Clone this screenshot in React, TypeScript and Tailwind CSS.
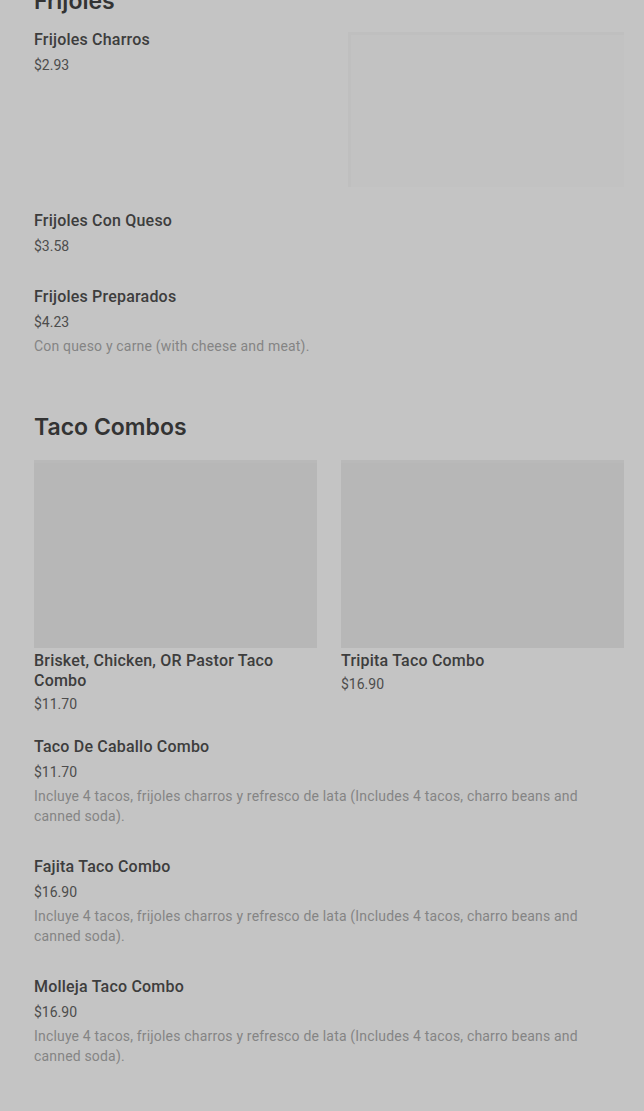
const combos = [
  {
    name: 'Taco De Caballo Combo',
    price: '$11.70',
    desc: 'Incluye 4 tacos, frijoles charros y refresco de lata (Includes 4 tacos, charro beans and canned soda).',
  },
  {
    name: 'Fajita Taco Combo',
    price: '$16.90',
    desc: 'Incluye 4 tacos, frijoles charros y refresco de lata (Includes 4 tacos, charro beans and canned soda).',
  },
  {
    name: 'Molleja Taco Combo',
    price: '$16.90',
    desc: 'Incluye 4 tacos, frijoles charros y refresco de lata (Includes 4 tacos, charro beans and canned soda).',
  },
];

function ItemText({ name, price, desc }: { name: string; price: string; desc?: string }) {
  return (
    <div>
      <h3 className="text-base leading-5 font-medium tracking-[0.2px] text-[#3d3d3d]">{name}</h3>
      <p className="mt-[5px] text-sm leading-5 text-[#4d4d4d]">{price}</p>
      {desc && <p className="mt-[4px] text-sm leading-5 tracking-[0.18px] text-[#848484]">{desc}</p>}
    </div>
  );
}

export default function App() {
  return (
    <div
      className="min-h-[1111px] bg-[#c4c4c4] pl-[34px] pr-[20px] overflow-hidden"
      style={{ fontFamily: 'Roboto, "Liberation Sans", sans-serif' }}
    >
      {/* Frijoles */}
      <h2 className="-mt-[15px] text-[23px] leading-8 font-semibold text-[#333333] font-['Inter',sans-serif]">
        Frijoles
      </h2>
      <div className="mt-[13px] flex justify-between">
        <ItemText name="Frijoles Charros" price="$2.93" />
        <div className="mt-[2px] h-[155px] w-[276px] bg-[#c2c2c2] border-l-[3px] border-t-[3px] border-[#bfbfbf]" />
      </div>
      <div className="mt-[24px]">
        <ItemText name="Frijoles Con Queso" price="$3.58" />
      </div>
      <div className="mt-[31px]">
        <ItemText
          name="Frijoles Preparados"
          price="$4.23"
          desc="Con queso y carne (with cheese and meat)."
        />
      </div>

      {/* Taco Combos */}
      <h2 className="mt-[55px] text-[23px] leading-8 font-semibold text-[#333333] font-['Inter',sans-serif]">
        Taco Combos
      </h2>
      <div className="mt-[17px] grid grid-cols-2 gap-x-[24px]">
        <div>
          <div className="h-[188px] bg-[#b7b7b7] border-t-[3px] border-[#b9b9b9]" />
          <h3 className="mt-[3px] text-base leading-5 font-medium tracking-[0.2px] text-[#3d3d3d]">
            Brisket, Chicken, OR Pastor Taco Combo
          </h3>
          <p className="mt-[3px] text-sm leading-5 text-[#4d4d4d]">$11.70</p>
        </div>
        <div>
          <div className="h-[188px] bg-[#b7b7b7] border-t-[3px] border-[#b9b9b9]" />
          <h3 className="mt-[3px] text-base leading-5 font-medium tracking-[0.2px] text-[#3d3d3d]">
            Tripita Taco Combo
          </h3>
          <p className="mt-[3px] text-sm leading-5 text-[#4d4d4d]">$16.90</p>
        </div>
      </div>
      <div className="mt-[23px] flex flex-col gap-[31px] pr-[30px]">
        {combos.map((c) => (
          <ItemText key={c.name} name={c.name} price={c.price} desc={c.desc} />
        ))}
      </div>
    </div>
  );
}
